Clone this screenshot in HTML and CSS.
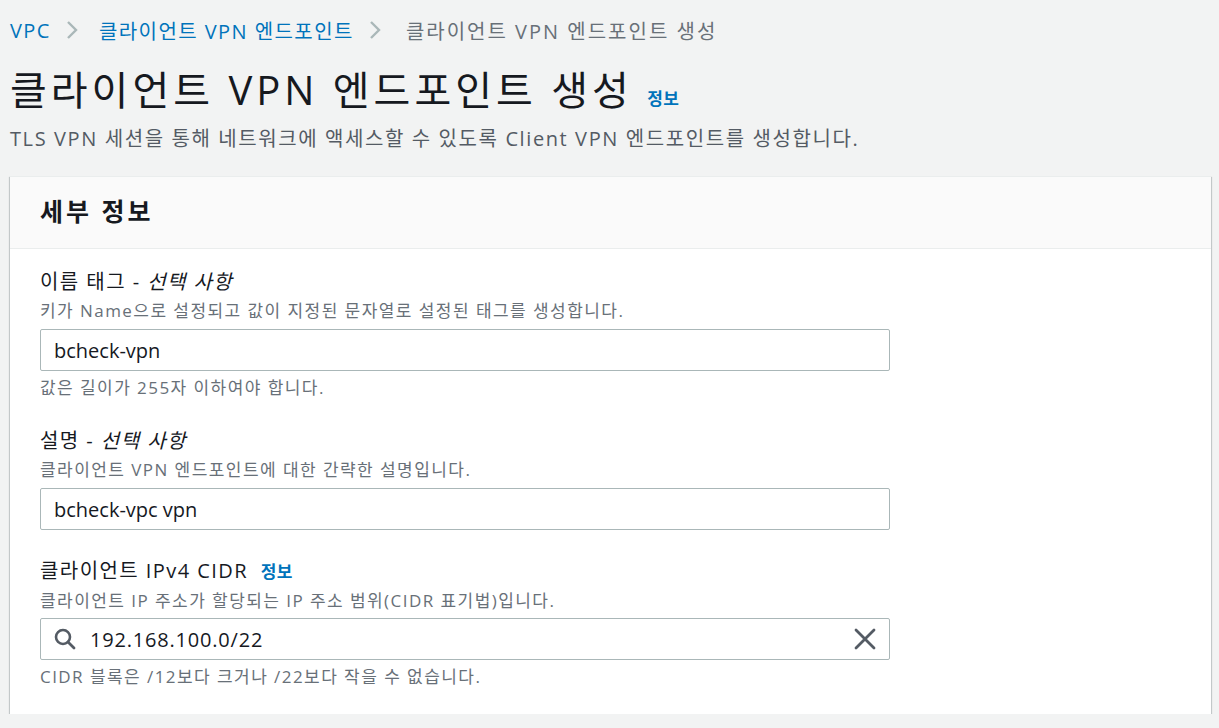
FILE: index.html
```html
<!DOCTYPE html>
<html lang="ko">
<head>
    <meta charset="UTF-8">
    <title>클라이언트 VPN 엔드포인트 생성</title>
    <link rel="stylesheet" href="styles.css">
</head>
<body>
    <nav class="breadcrumbs">
        <a class="crumb" href="#">VPC</a>
        <span class="chevron">
            <svg width="14" height="20" viewBox="0 0 14 20"><path d="M3 2 L11 10 L3 18" fill="none" stroke="#aab7b8" stroke-width="2.4"/></svg>
        </span>
        <a class="crumb" href="#">클라이언트 VPN 엔드포인트</a>
        <span class="chevron">
            <svg width="14" height="20" viewBox="0 0 14 20"><path d="M3 2 L11 10 L3 18" fill="none" stroke="#aab7b8" stroke-width="2.4"/></svg>
        </span>
        <span class="crumb current">클라이언트 VPN 엔드포인트 생성</span>
    </nav>

    <div class="page-header">
        <h1>클라이언트 VPN 엔드포인트 생성 <a class="info" href="#">정보</a></h1>
        <p class="page-desc">TLS VPN 세션을 통해 네트워크에 액세스할 수 있도록 Client VPN 엔드포인트를 생성합니다.</p>
    </div>

    <div class="container">
        <div class="container-header">
            <h2>세부 정보</h2>
        </div>
        <div class="container-body">
            <div class="field">
                <div class="field-label">이름 태그 - <i>선택 사항</i></div>
                <div class="field-desc">키가 Name으로 설정되고 값이 지정된 문자열로 설정된 태그를 생성합니다.</div>
                <div class="input">bcheck-vpn</div>
                <div class="field-hint">값은 길이가 255자 이하여야 합니다.</div>
            </div>

            <div class="field">
                <div class="field-label">설명 - <i>선택 사항</i></div>
                <div class="field-desc">클라이언트 VPN 엔드포인트에 대한 간략한 설명입니다.</div>
                <div class="input">bcheck-vpc vpn</div>
            </div>

            <div class="field">
                <div class="field-label">클라이언트 IPv4 CIDR <a class="info" href="#">정보</a></div>
                <div class="field-desc">클라이언트 IP 주소가 할당되는 IP 주소 범위(CIDR 표기법)입니다.</div>
                <div class="input search">
                    <svg class="icon" width="22" height="22" viewBox="0 0 22 22"><circle cx="9" cy="9" r="7" fill="none" stroke="#545b64" stroke-width="2.6"/><path d="M14 14 L20 20" stroke="#545b64" stroke-width="2.8" stroke-linecap="round"/></svg>
                    <span class="value">192.168.100.0/22</span>
                    <svg class="icon clear" width="22" height="22" viewBox="0 0 22 22"><path d="M2 2 L20 20 M20 2 L2 20" stroke="#545b64" stroke-width="2.8" stroke-linecap="round"/></svg>
                </div>
                <div class="field-hint">CIDR 블록은 /12보다 크거나 /22보다 작을 수 없습니다.</div>
            </div>
        </div>
    </div>
</body>
</html>
```

FILE: styles.css
```css
body {
    margin: 0;
    padding: 0 8px 0 10px;
    background: #f2f3f3;
    color: #16191f;
    font-family: "Open Sans", "Noto Sans CJK KR", sans-serif;
    letter-spacing: 0.09em;
}

a {
    text-decoration: none;
}

.breadcrumbs {
    display: flex;
    align-items: center;
    height: 28px;
    margin-top: 16px;
    font-size: 20px;
}

.crumb {
    color: #0073bb;
}

.crumb.current {
    color: #687078;
    margin-left: 4px;
    letter-spacing: 0.1em;
}

.chevron {
    display: flex;
    align-items: center;
    margin: 0 20px 0 14px;
}

.page-header h1 {
    margin: 20px 0 0 0;
    font-size: 40px;
    font-weight: 400;
    line-height: 52px;
    letter-spacing: 0.1em;
}

.info {
    color: #0073bb;
    font-size: 17px;
    font-weight: 700;
    letter-spacing: 0.03em;
}

.page-desc {
    margin: 0;
    font-size: 20px;
    line-height: 28px;
    color: #545b64;
    letter-spacing: 0.08em;
}

.container {
    margin-top: 23px;
    background: #fff;
    box-shadow: 0 1px 1px 0 rgba(0, 28, 36, 0.3), 1px 1px 1px 0 rgba(0, 28, 36, 0.15), -1px 1px 1px 0 rgba(0, 28, 36, 0.15);
    border-top: 1px solid #eaeded;
}

.container-header {
    background: #fafafa;
    border-bottom: 1px solid #eaeded;
    padding: 0 30px;
    height: 71px;
    display: flex;
    align-items: center;
}

.container-header h2 {
    margin: 0 0 5px 0;
    font-size: 25px;
    font-weight: 700;
    letter-spacing: 0.12em;
}

.container-body {
    padding: 19px 30px 25px 30px;
    display: flex;
    flex-direction: column;
    gap: 27px;
}

.field {
    display: flex;
    flex-direction: column;
}

.field-label {
    font-size: 20px;
    line-height: 28px;
}

.field-label .info {
    margin-left: 6px;
}

.field-desc {
    margin-top: 3px;
    font-size: 17px;
    line-height: 24px;
    color: #687078;
}

.input {
    margin-top: 6px;
    height: 40px;
    width: 822px;
    border: 1px solid #aab7b8;
    border-radius: 2px;
    padding: 0 13px;
    display: flex;
    align-items: center;
    font-size: 20px;
    letter-spacing: 0;
    color: #16191f;
}

.input.search {
    margin-top: 5px;
}

.input.search .value {
    flex: 1;
    margin-left: 14px;
    letter-spacing: 0.8px;
}

.field-hint {
    margin-top: 5px;
    font-size: 17px;
    line-height: 24px;
    color: #687078;
}
```
